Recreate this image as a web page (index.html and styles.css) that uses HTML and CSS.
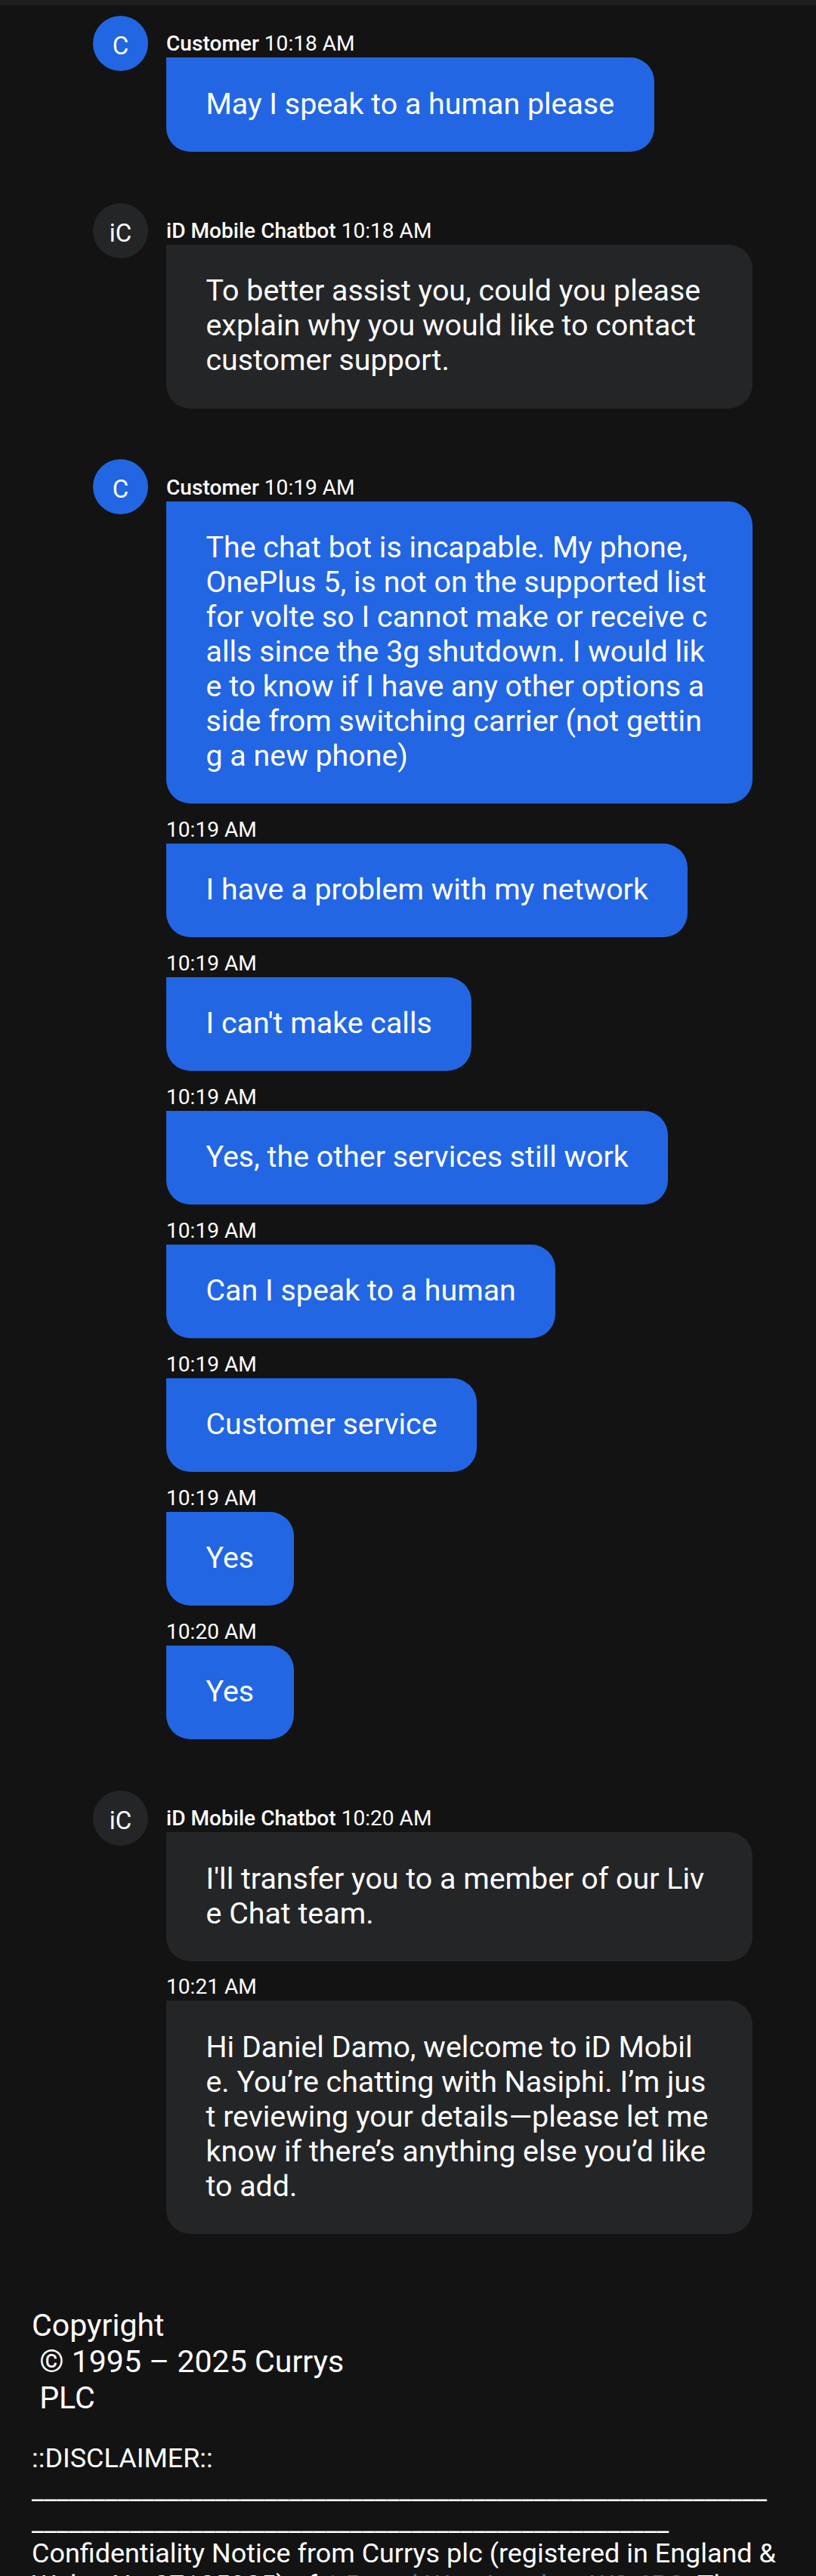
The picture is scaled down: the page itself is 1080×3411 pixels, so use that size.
FILE: index.html
```html
<!DOCTYPE html>
<html lang="en">
<head>
<meta charset="utf-8">
<title>Chat transcript</title>
<link rel="stylesheet" href="styles.css">
</head>
<body>
<div class="topbar"></div>
<main class="transcript">
  <section class="turn customer">
    <div class="avatar">C</div>
    <div class="messages">
      <p class="meta"><b>Customer</b> 10:18 AM</p>
      <p class="bubble">May I speak to a human please</p>
    </div>
  </section>
  <section class="turn bot">
    <div class="avatar">iC</div>
    <div class="messages">
      <p class="meta"><b>iD Mobile Chatbot</b> 10:18 AM</p>
      <p class="bubble wide">To better assist you, could you please<br>explain why you would like to contact<br>customer support.</p>
    </div>
  </section>
  <section class="turn customer">
    <div class="avatar">C</div>
    <div class="messages">
      <p class="meta"><b>Customer</b> 10:19 AM</p>
      <p class="bubble wide">The chat bot is incapable. My phone,<br>OnePlus 5, is not on the supported list<br>for volte so I cannot make or receive c<br>alls since the 3g shutdown. I would lik<br>e to know if I have any other options a<br>side from switching carrier (not gettin<br>g a new phone)</p>
      <p class="meta">10:19 AM</p>
      <p class="bubble">I have a problem with my network</p>
      <p class="meta">10:19 AM</p>
      <p class="bubble">I can't make calls</p>
      <p class="meta">10:19 AM</p>
      <p class="bubble">Yes, the other services still work</p>
      <p class="meta">10:19 AM</p>
      <p class="bubble">Can I speak to a human</p>
      <p class="meta">10:19 AM</p>
      <p class="bubble">Customer service</p>
      <p class="meta">10:19 AM</p>
      <p class="bubble">Yes</p>
      <p class="meta">10:20 AM</p>
      <p class="bubble">Yes</p>
    </div>
  </section>
  <section class="turn bot">
    <div class="avatar">iC</div>
    <div class="messages">
      <p class="meta"><b>iD Mobile Chatbot</b> 10:20 AM</p>
      <p class="bubble wide">I'll transfer you to a member of our Liv<br>e Chat team.</p>
      <p class="meta">10:21 AM</p>
      <p class="bubble wide">Hi Daniel Damo, welcome to iD Mobil<br>e. You’re chatting with Nasiphi. I’m jus<br>t reviewing your details—please let me<br>know if there’s anything else you’d like<br>to add.</p>
    </div>
  </section>
</main>
<footer class="footer">
  <p class="copyright">Copyright
 © 1995 – 2025 Currys
 PLC</p>
  <p class="disclaimer">::DISCLAIMER::<br>____________________________________________________________<br>____________________________________________________<br>Confidentiality Notice from Currys plc (registered in England &amp;<br>Wales No.07105905) of <a class="link">1 Portal Way, London, W3 6RS</a>. The</p>
</footer>
</body>
</html>
```
FILE: styles.css
```css
html { background: #131313; }
body {
  margin: 0;
  height: 3411px;
  overflow: hidden;
  background: #131313;
  color: #fff;
  font-family: Roboto, "Liberation Sans", sans-serif;
}
p { margin: 0; white-space: nowrap; }
.topbar { height: 7px; background: #1e1f20; }
.transcript {
  display: flex;
  flex-direction: column;
  gap: 67.75px;
  padding: 13.75px 84px 0 123px;
}
.turn { display: flex; gap: 24px; }
.avatar {
  flex: none;
  width: 73px;
  height: 73px;
  border-radius: 50%;
  font-size: 33px;
  line-height: 79px;
  text-align: center;
}
.messages {
  flex: 1;
  display: flex;
  flex-direction: column;
  align-items: flex-start;
  padding-top: 3px;
}
.meta {
  height: 52.25px;
  box-sizing: border-box;
  padding-top: 17.25px;
  font-size: 28.1px;
  line-height: 33px;
}
.meta b { font-weight: 500; }
.bubble {
  box-sizing: border-box;
  padding: 38.5px 52.5px 40.25px;
  border-radius: 0 32px 32px 32px;
  font-size: 39.375px;
  line-height: 46px;
}
.wide { width: 776px; }
.customer .avatar, .customer .bubble { background: #2266e3; }
.bot .avatar, .bot .bubble { background: #242527; }
.footer { padding: 97px 42px 0; }
.copyright { font-size: 41.1px; line-height: 48px; white-space: pre; }
.disclaimer { margin-top: 35px; font-size: 35.95px; line-height: 42px; }
.link { color: #3b69b4; }
```
